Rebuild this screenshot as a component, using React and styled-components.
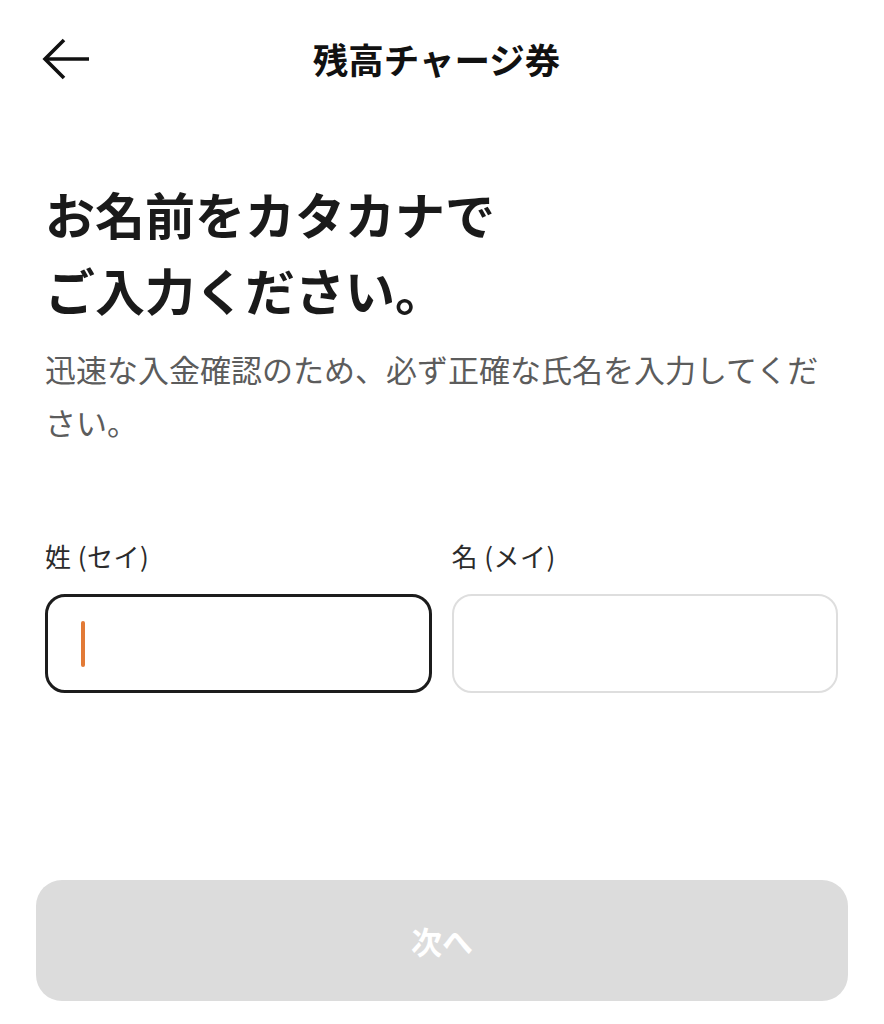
import React from 'react';
import styled, { createGlobalStyle } from 'styled-components';

const GlobalStyle = createGlobalStyle`
  html, body {
    margin: 0;
    padding: 0;
    background: #ffffff;
  }
  body {
    font-family: "Noto Sans CJK JP", "Noto Sans", sans-serif;
    color: #1a1a1a;
  }
`;

const Page = styled.div`
  width: 884px;
  height: 1024px;
  display: flex;
  flex-direction: column;
  box-sizing: border-box;
`;

const Header = styled.header`
  height: 118px;
  display: grid;
  grid-template-columns: 1fr auto 1fr;
  align-items: center;
  padding: 0 52px 0 41px;
`;

const BackButton = styled.button`
  justify-self: start;
  display: flex;
  align-items: center;
  justify-content: center;
  padding: 0;
  margin: 0;
  border: none;
  background: none;
  cursor: pointer;
  color: #111;
`;

const Title = styled.h1`
  margin: 0;
  font-size: 35.5px;
  line-height: 1;
  font-weight: 700;
  color: #111;
`;

const Main = styled.main`
  flex: 1;
  padding: 0 46px 0 45px;
`;

const Heading = styled.h2`
  margin: 57px 0 0;
  font-size: 50px;
  line-height: 76px;
  font-weight: 700;
  color: #1a1a1a;
`;

const Lead = styled.p`
  margin: 15px 0 0;
  max-width: 790px;
  font-size: 31px;
  line-height: 53px;
  color: #5c5c5c;
`;

const FieldRow = styled.div`
  margin-top: 90px;
  display: grid;
  grid-template-columns: 1fr 1fr;
  column-gap: 20px;
`;

const Field = styled.div`
  display: flex;
  flex-direction: column;
`;

const Label = styled.label`
  font-size: 26px;
  line-height: 36px;
  letter-spacing: 0.5px;
  color: #2b2b2b;
  margin-bottom: 20px;
`;

const InputBox = styled.div`
  height: 99px;
  box-sizing: border-box;
  border-radius: 20px;
  border: ${p => (p.$focused ? '3px solid #1c1c1c' : '2px solid #dedede')};
  display: flex;
  align-items: center;
  padding-left: ${p => (p.$focused ? '33px' : '34px')};
  background: #fff;
`;

const Caret = styled.span`
  width: 4px;
  height: 46px;
  border-radius: 2px;
  background: #e27a36;
`;

const Footer = styled.footer`
  padding: 0 36px 23px;
`;

const NextButton = styled.button`
  width: 100%;
  height: 121px;
  border: none;
  border-radius: 26px;
  background: #dcdcdc;
  color: #ffffff;
  font-family: inherit;
  font-size: 31px;
  font-weight: 700;
  display: flex;
  align-items: center;
  justify-content: center;
`;

function ArrowLeft() {
  return (
    <svg width="50" height="44" viewBox="0 0 50 44" fill="none">
      <path d="M4 22 H48" stroke="currentColor" strokeWidth="3.6" strokeLinecap="butt" />
      <path d="M23 3 L4 22 L23 41" stroke="currentColor" strokeWidth="3.6" strokeLinecap="butt" strokeLinejoin="miter" />
    </svg>
  );
}

export default function App() {
  return (
    <Page>
      <GlobalStyle />
      <Header>
        <BackButton aria-label="戻る">
          <ArrowLeft />
        </BackButton>
        <Title>残高チャージ券</Title>
        <span />
      </Header>
      <Main>
        <Heading>
          お名前をカタカナで
          <br />
          ご入力ください。
        </Heading>
        <Lead>迅速な入金確認のため、必ず正確な氏名を入力してください。</Lead>
        <FieldRow>
          <Field>
            <Label>姓 (セイ)</Label>
            <InputBox $focused>
              <Caret />
            </InputBox>
          </Field>
          <Field>
            <Label>名 (メイ)</Label>
            <InputBox />
          </Field>
        </FieldRow>
      </Main>
      <Footer>
        <NextButton disabled>次へ</NextButton>
      </Footer>
    </Page>
  );
}
